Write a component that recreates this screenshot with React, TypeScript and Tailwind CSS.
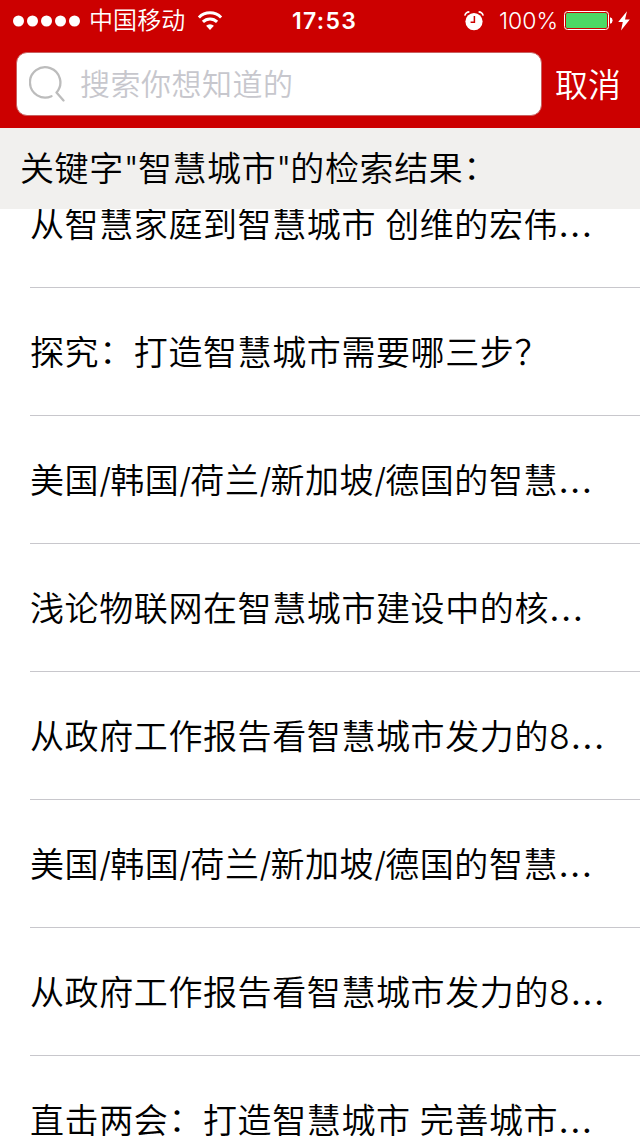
const rows = [
  '从智慧家庭到智慧城市 创维的宏伟...',
  '探究：打造智慧城市需要哪三步？',
  '美国/韩国/荷兰/新加坡/德国的智慧...',
  '浅论物联网在智慧城市建设中的核...',
  '从政府工作报告看智慧城市发力的8...',
  '美国/韩国/荷兰/新加坡/德国的智慧...',
  '从政府工作报告看智慧城市发力的8...',
  '直击两会：打造智慧城市 完善城市...',
];

function Spaced({ text }: { text: string }) {
  return text.split(/(\.\.\.|\/|"|：| )/).map((part, i) => {
    if (part === '...') return <span key={i} className="ml-[0.5px] font-normal tracking-[1.9px]">{part}</span>;
    if (part === '/' || part === '"') return <span key={i} className="tracking-[-0.9px]">{part}</span>;
    if (part === ' ') return <span key={i} className="tracking-[-0.4px]">{part}</span>;
    if (part === '：') return <span key={i} className="align-[1px] font-['Noto_Sans_CJK_SC',sans-serif] leading-none">{part}</span>;
    return part;
  });
}

function WifiIcon() {
  return (
    <svg className="ml-3" width="26" height="20" viewBox="0 0 26 20" fill="none" stroke="currentColor" strokeWidth="3">
      <path d="M1.9 6.5a15.6 15.6 0 0 1 22.2 0" />
      <path d="M5.9 10.9a10 10 0 0 1 14.2 0" />
      <path d="M13 19l-3.9-4.2a5.6 5.6 0 0 1 7.8 0z" fill="currentColor" stroke="none" />
    </svg>
  );
}

function AlarmIcon() {
  return (
    <svg width="20" height="20" viewBox="0 0 20 20" fill="none">
      <circle cx="10" cy="10.6" r="8.6" fill="currentColor" />
      <path d="M.8 4.6A5 5 0 0 1 5.4.9M14.6.9a5 5 0 0 1 4.6 3.7" stroke="currentColor" strokeWidth="1.6" />
      <path d="M10.4 5v6.2H6.6" stroke="#cc0000" strokeWidth="1.5" />
    </svg>
  );
}

function BatteryIcon() {
  return (
    <svg className="ml-[6px]" width="50" height="20" viewBox="0 0 50 20" fill="none">
      <rect x=".5" y=".5" width="44" height="18" rx="3" stroke="#fff" />
      <rect x="2" y="2" width="41" height="15" rx="1.5" fill="#4cd964" />
      <path d="M46 6.2q2.6.6 2.6 3.3T46 12.8z" fill="#fff" />
    </svg>
  );
}

export default function App() {
  return (
    <div className="flex h-[1136px] w-[640px] flex-col overflow-hidden bg-white font-['Inter','Noto_Sans_CJK_SC',sans-serif] font-[350] text-black">
      <header className="h-32 shrink-0 bg-[#cc0000] text-white">
        <div className="grid h-[42px] grid-cols-[280px_90px_1fr] items-center pl-3 pr-[10px]">
          <div className="flex items-center whitespace-nowrap">
            <svg width="69" height="12" viewBox="0 0 69 12" fill="currentColor">
              <circle cx="6.5" cy="6" r="5.5" />
              <circle cx="20.5" cy="6" r="5.5" />
              <circle cx="34.5" cy="6" r="5.5" />
              <circle cx="48.5" cy="6" r="5.5" />
              <circle cx="62.5" cy="6" r="5.5" />
            </svg>
            <span className="ml-2 text-2xl tracking-[0.1px]">中国移动</span>
            <WifiIcon />
          </div>
          <div className="text-[23px] font-semibold tracking-[1.3px]">17:53</div>
          <div className="flex items-center justify-end">
            <AlarmIcon />
            <span className="ml-[15px] text-[23px]">100%</span>
            <BatteryIcon />
            <svg className="ml-1" width="12" height="20" viewBox="0 0 12 20" fill="currentColor">
              <path d="M9 .3.2 11h4.6L3 19.6 11.8 8.4H7z" />
            </svg>
          </div>
        </div>
        <div className="flex h-[84px] items-center pl-4">
          <label className="flex h-[64px] w-[526px] items-center rounded-[11px] border border-[#c86060] bg-white pl-[12px] text-[30px] text-[#c7c7cd]">
            <svg width="38" height="38" viewBox="0 0 38 38" fill="none" stroke="#bcbcbc" strokeWidth="2.3" strokeLinecap="round" strokeLinejoin="round">
              <path d="M22.5 31.2A15.2 15.2 0 1 1 27.5 27.5L34.5 35.5" />
            </svg>
            <span className="ml-[13px] pt-px tracking-[0.5px]">搜索你想知道的</span>
          </label>
          <button className="ml-[13px] pt-1 text-[33px]">取消</button>
        </div>
      </header>
      <h1 className="h-[81px] shrink-0 bg-[#f1f0ee] pl-[20px] text-[34px] leading-[82px] tracking-[0.6px]">
        <Spaced text={'关键字"智慧城市"的检索结果：'} />
      </h1>
      <div className="min-h-0 flex-1 overflow-hidden">
        <ul className="-mt-[49px]">
          {rows.map((title, i) => (
            <li key={i} className="ml-[30px] h-32 whitespace-nowrap border-b border-[#c8c7cc] pt-px text-[34px] leading-[128px] tracking-[0.6px]">
              <Spaced text={title} />
            </li>
          ))}
        </ul>
      </div>
    </div>
  );
}
